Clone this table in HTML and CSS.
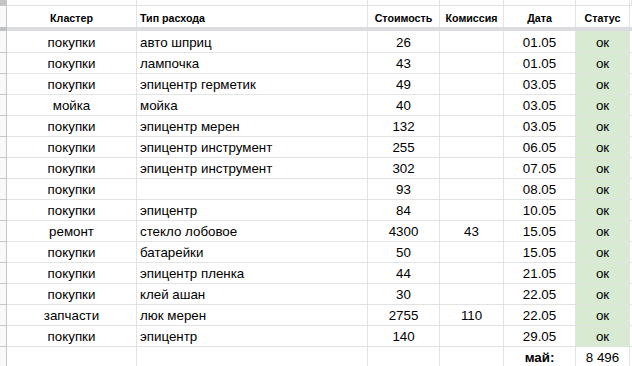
FILE: index.html
```html
<!DOCTYPE html>
<html lang="ru">
<head>
<meta charset="utf-8">
<title>Расходы</title>
<link rel="stylesheet" href="styles.css">
</head>
<body>
<div class="sheet">
  <div class="row top"><div class="rh corner"></div><div></div><div></div><div></div><div></div><div></div><div></div><div></div></div>
  <div class="row head"><div class="rh"></div><div class="c">Кластер</div><div class="l">Тип расхода</div><div class="c">Стоимость</div><div class="c">Комиссия</div><div class="c">Дата</div><div class="c">Статус</div><div></div></div>
  <div class="band"><div class="band-rh"></div></div>
  <div class="row data first"><div class="rh"></div><div class="c">покупки</div><div class="l">авто шприц</div><div class="c">26</div><div class="c"></div><div class="c">01.05</div><div class="c ok">ок</div><div></div></div>
  <div class="row data"><div class="rh"></div><div class="c">покупки</div><div class="l">лампочка</div><div class="c">43</div><div class="c"></div><div class="c">01.05</div><div class="c ok">ок</div><div></div></div>
  <div class="row data"><div class="rh"></div><div class="c">покупки</div><div class="l">эпицентр герметик</div><div class="c">49</div><div class="c"></div><div class="c">03.05</div><div class="c ok">ок</div><div></div></div>
  <div class="row data"><div class="rh"></div><div class="c">мойка</div><div class="l">мойка</div><div class="c">40</div><div class="c"></div><div class="c">03.05</div><div class="c ok">ок</div><div></div></div>
  <div class="row data"><div class="rh"></div><div class="c">покупки</div><div class="l">эпицентр мерен</div><div class="c">132</div><div class="c"></div><div class="c">03.05</div><div class="c ok">ок</div><div></div></div>
  <div class="row data"><div class="rh"></div><div class="c">покупки</div><div class="l">эпицентр инструмент</div><div class="c">255</div><div class="c"></div><div class="c">06.05</div><div class="c ok">ок</div><div></div></div>
  <div class="row data"><div class="rh"></div><div class="c">покупки</div><div class="l">эпицентр инструмент</div><div class="c">302</div><div class="c"></div><div class="c">07.05</div><div class="c ok">ок</div><div></div></div>
  <div class="row data"><div class="rh"></div><div class="c">покупки</div><div class="l"></div><div class="c">93</div><div class="c"></div><div class="c">08.05</div><div class="c ok">ок</div><div></div></div>
  <div class="row data"><div class="rh"></div><div class="c">покупки</div><div class="l">эпицентр</div><div class="c">84</div><div class="c"></div><div class="c">10.05</div><div class="c ok">ок</div><div></div></div>
  <div class="row data"><div class="rh"></div><div class="c">ремонт</div><div class="l">стекло лобовое</div><div class="c">4300</div><div class="c">43</div><div class="c">15.05</div><div class="c ok">ок</div><div></div></div>
  <div class="row data"><div class="rh"></div><div class="c">покупки</div><div class="l">батарейки</div><div class="c">50</div><div class="c"></div><div class="c">15.05</div><div class="c ok">ок</div><div></div></div>
  <div class="row data"><div class="rh"></div><div class="c">покупки</div><div class="l">эпицентр пленка</div><div class="c">44</div><div class="c"></div><div class="c">21.05</div><div class="c ok">ок</div><div></div></div>
  <div class="row data"><div class="rh"></div><div class="c">покупки</div><div class="l">клей ашан</div><div class="c">30</div><div class="c"></div><div class="c">22.05</div><div class="c ok">ок</div><div></div></div>
  <div class="row data"><div class="rh"></div><div class="c">запчасти</div><div class="l">люк мерен</div><div class="c">2755</div><div class="c">110</div><div class="c">22.05</div><div class="c ok">ок</div><div></div></div>
  <div class="row data"><div class="rh"></div><div class="c">покупки</div><div class="l">эпицентр</div><div class="c">140</div><div class="c"></div><div class="c">29.05</div><div class="c ok">ок</div><div></div></div>
  <div class="row data"><div class="rh"></div><div class="c"></div><div class="l"></div><div class="c"></div><div class="c"></div><div class="c b">май:</div><div class="c">8 496</div><div></div></div>
</div>
</body>
</html>
```

FILE: styles.css
```css
html, body {
  margin: 0;
  padding: 0;
  background: #ffffff;
  overflow: hidden;
}

.sheet {
  width: 632px;
  font-family: "Liberation Sans", Arial, sans-serif;
  font-size: 13.33px;
  color: #000000;
}

.row {
  display: grid;
  grid-template-columns: 7px 130px 231px 72px 64px 72px 54px 1fr;
}

.row > div {
  box-sizing: border-box;
  border-right: 1px solid #e2e3e3;
  border-bottom: 1px solid #e2e3e3;
  display: flex;
  align-items: flex-end;
  padding: 0 3px 1px;
  line-height: 16px;
  white-space: nowrap;
  overflow: hidden;
}

.row > .c { justify-content: center; }
.row > .l { justify-content: flex-start; }

.row > .rh {
  background: #f8f9fa;
  border-right-color: #c7c7c7;
  border-bottom-color: #c7c7c7;
  padding: 0;
}

.row > .corner { background: #c4c4c4; }

.top { height: 6px; }
.top > div { padding: 0; }

.head { height: 21px; }
.head > div {
  border-bottom: none;
  font-weight: bold;
  font-size: 10.67px;
  line-height: 14px;
  padding-bottom: 2px;
}

.band {
  height: 4px;
  background: #dadce0;
  display: flex;
}
.band-rh {
  width: 7px;
  background: #bdc1c6;
}

.data { height: 21px; }
.data.first { height: 22px; }

.row > .ok { background: #d9ead3; }
.row > .b { font-weight: bold; }
```
